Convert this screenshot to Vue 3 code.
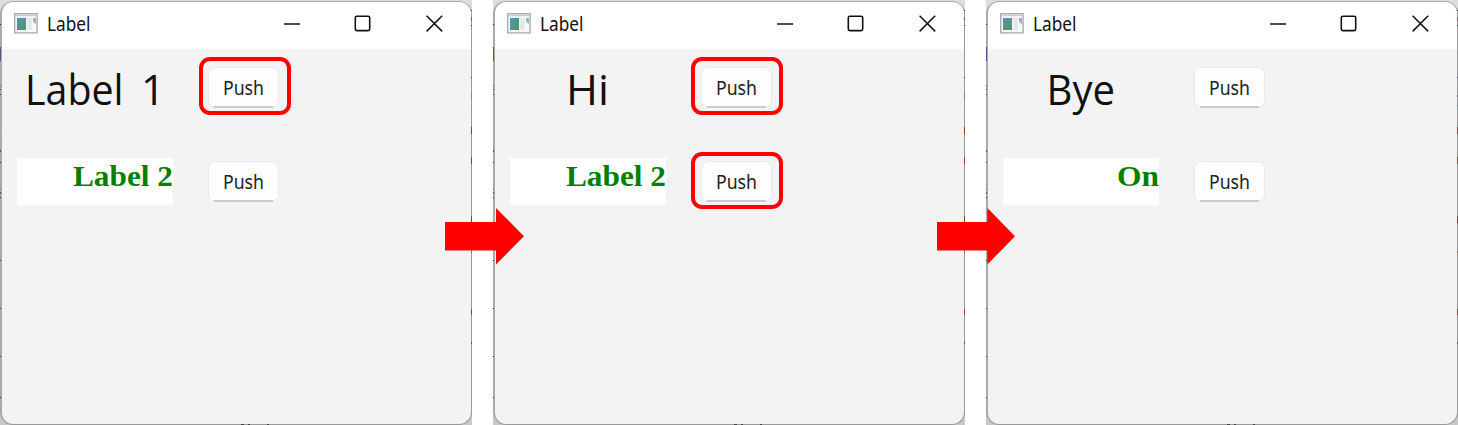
<script setup>
const windows = [
  {
    id: 'first',
    rows: [
      { kind: 'plain', words: [{ t: 'Label', x: 8, w: 98.5 }, { t: '1', x: 124, w: 24 }], ring: 'r-first' },
      { kind: 'accent', text: 'Label 2', w: 100 }
    ],
    arrow: 'a-first'
  },
  {
    id: 'second',
    rows: [
      { kind: 'plain', words: [{ t: 'Hi', x: 56, w: 43 }], ring: 'r-second' },
      { kind: 'accent', text: 'Label 2', w: 100, ring: 'r-low' }
    ],
    arrow: 'a-second'
  },
  {
    id: 'third',
    rows: [
      { kind: 'plain', words: [{ t: 'Bye', x: 43.5, w: 68.5 }] },
      { kind: 'accent', text: 'On', w: 42 }
    ]
  }
]

// Bits of the desktop visible along the window edges: [y, height, colour]
const leftBits = [[24, 1, '#333'], [47, 14, '#65527c'], [85, 2, '#b07840'], [89, 1, '#555'], [94, 1, '#333'], [128, 2, '#99c4bd'], [150, 2, '#555'], [153, 2, '#c49a55'], [162, 1, '#333'], [188, 2, '#bf7d45'], [192, 2, '#465a77'], [197, 1, '#333'], [260, 1, '#444'], [308, 1, '#444'], [356, 1, '#444'], [397, 1, '#333']]
const rightBits = [[10, 1, '#333'], [17, 4, '#83554d'], [25, 1, '#333'], [77, 1, '#7f3729'], [95, 2, '#6b6b70'], [105, 1, '#c36c35'], [127, 7, '#7c443b'], [157, 7, '#7c443b'], [216, 7, '#7c443b'], [251, 2, '#a5632f'], [309, 6, '#7c443b'], [342, 2, '#555']]
</script>

<template>
  <main class="stage">
    <section v-for="win in windows" :key="win.id" class="shot">
      <div class="window">
        <header class="titlebar">
          <svg class="app-icon" width="24" height="21" viewBox="0 0 24 21">
            <defs>
              <linearGradient :id="'pic-' + win.id" x1="0" y1="0" x2=".6" y2="1">
                <stop offset="0" stop-color="#5b8fc0" />
                <stop offset="1" stop-color="#4b9a6c" />
              </linearGradient>
            </defs>
            <rect x=".7" y=".7" width="22.4" height="19.2" fill="#f8f9fa" stroke="#a8adb5" stroke-width="1.4" />
            <path d="M1.5 2.6H22.5" stroke="#c9ced6" stroke-width="1.5" />
            <rect x="3" y="5" width="9" height="12" :fill="`url(#pic-${win.id})`" />
            <rect x="13.2" y="5" width="4.6" height="12" fill="#e6e7e9" />
            <path d="M19 5h3v6.5l-3-3z" fill="#8cc5a0" />
            <path d="M19 5h3v2h-3z" fill="#8db2d5" />
          </svg>
          <svg class="title" width="60" height="30">
            <text x="0" y="21" textLength="43.5" lengthAdjust="spacingAndGlyphs">Label</text>
          </svg>
          <svg class="controls" width="162" height="20" viewBox="0 0 162 20">
            <path d="M2 12H18" stroke="#111" stroke-width="1.6" />
            <rect x="73.3" y="4.2" width="14.4" height="14.4" rx="1.5" fill="none" stroke="#111" stroke-width="1.6" />
            <path d="M144.6 3.8l15.6 15.6M160.2 3.8l-15.6 15.6" stroke="#111" stroke-width="1.5" />
          </svg>
        </header>
        <div class="body">
          <div v-for="row in win.rows" :key="row.kind" class="row">
            <svg class="caption" :class="row.kind" width="156" height="47">
              <template v-if="row.kind === 'plain'">
                <text
                  v-for="word in row.words" :key="word.t" :x="word.x" y="41"
                  :textLength="word.w" lengthAdjust="spacingAndGlyphs"
                >{{ word.t }}</text>
              </template>
              <text v-else :x="156 - row.w" y="28.3" :textLength="row.w" lengthAdjust="spacingAndGlyphs">{{ row.text }}</text>
            </svg>
            <div class="push-slot">
              <button class="push">
                <svg width="71" height="40">
                  <text x="15" y="27" textLength="41" lengthAdjust="spacingAndGlyphs">Push</text>
                </svg>
              </button>
              <span v-if="row.ring" class="ring" :class="row.ring"></span>
            </div>
          </div>
        </div>
      </div>
      <svg class="edges" width="472" height="425" shape-rendering="crispEdges">
        <rect v-for="b in leftBits" :key="'l' + b[0]" x="0" :y="b[0]" width="1" :height="b[1]" :fill="b[2]" />
        <rect v-for="b in rightBits" :key="'r' + b[0]" x="471" :y="b[0]" width="1" :height="b[1]" :fill="b[2]" />
        <path d="M241 424.5h3M248 424.5h2M267 424.5h2" stroke="#444" stroke-width="1" />
      </svg>
      <svg v-if="win.arrow" class="arrow" :class="win.arrow" width="79" height="57" viewBox="0 0 79 57" preserveAspectRatio="none">
        <path d="M0 14H51V0L79 28.2L51 56.5V42.4H0z" fill="#f00" />
      </svg>
    </section>
  </main>
</template>

<style>
body { background: #fff; overflow: hidden; }
</style>

<style scoped>
.stage { display: flex; gap: 21px; width: 1458px; height: 425px; overflow: hidden; }
.shot { position: relative; flex: none; box-sizing: border-box; width: 472px; height: 425px; padding: 1px 0 1px 0; background: linear-gradient(#dedcde, #dcdcdc 20px, #c8c8c8 400px); }
.shot:nth-child(1) { z-index: 3; }
.shot:nth-child(2) { z-index: 2; }
.window { box-sizing: border-box; width: 472px; height: 424px; border: 1px solid #999; border-top-color: #aaa; border-left: 2px solid #aaa; border-radius: 13px; background: #f3f3f3; overflow: hidden; }
.titlebar { display: flex; height: 47px; background: #fff; }
.app-icon { margin: 10.5px 0 0 12px; }
.title { margin: 8px 0 0 9px; overflow: visible; }
.title text { font: 20px "Noto Sans", "Open Sans", sans-serif; fill: #111; }
.controls { margin: 10px 0 0 175px; }
.body { display: flex; flex-direction: column; gap: 47px; padding: 15px 0 0 15px; }
.row { display: flex; gap: 35px; height: 47px; }
.caption { flex: none; display: block; overflow: visible; }
.plain text { font: 42px "Open Sans", "Noto Sans", sans-serif; fill: #111; }
.accent { background: #fff; }
.accent text { font: bold 30px "Liberation Serif", serif; fill: #008000; }
.push-slot { position: relative; width: 71px; height: 41px; margin-top: 3px; }
.push { position: relative; display: block; box-sizing: border-box; width: 71px; height: 41px; padding: 0; border: 0; border-radius: 7px; background: #fdfdfd; box-shadow: inset 0 0 0 1px #e9e9e9; }
.push::after { content: ""; position: absolute; left: 6px; right: 6px; bottom: 0; height: 2px; background: #cacaca; }
.push svg { display: block; overflow: visible; }
.push text { font: 20px "Noto Sans", "Open Sans", sans-serif; fill: #222; }
.ring { position: absolute; box-sizing: border-box; left: -9px; top: -10px; width: 92px; height: 58px; border: 4px solid #f00; border-radius: 11px; }
.r-second { left: -10px; }
.r-low { left: -10px; top: -9px; height: 57px; }
.edges { position: absolute; left: 0; top: 0; pointer-events: none; }
.arrow { position: absolute; left: 445px; top: 208px; }
.a-second { left: 444px; width: 78px; }
</style>
